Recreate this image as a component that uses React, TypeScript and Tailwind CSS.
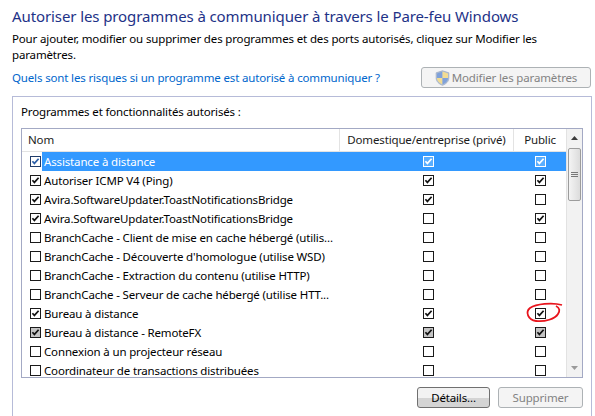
import React from "react";

type BoxKind = "normal" | "selected" | "selectedName" | "gray";

function Box({ checked, kind = "normal" }: { checked: boolean; kind?: BoxKind }) {
  const fill =
    kind === "selected" ? "#5aaeff" : kind === "gray" ? "#c4c4c4" : "#ffffff";
  const stroke =
    kind === "selected" ? "#ffffff" : kind === "selectedName" ? "#203c6a" : "#1a1a1a";
  const mark =
    kind === "selected" ? "#ffffff" : kind === "selectedName" ? "#2c5fa8" : "#111111";
  return (
    <svg width="11" height="11" viewBox="0 0 11 11" className="block shrink-0">
      <rect x="0.5" y="0.5" width="10" height="10" fill={fill} stroke={stroke} />
      {checked && (
        <path d="M2.4 5.2 L4.4 7.4 L8.6 2.8" fill="none" stroke={mark} strokeWidth="1.7" />
      )}
    </svg>
  );
}

function Shield() {
  return (
    <svg width="15" height="16" viewBox="0 0 15 16" className="shrink-0 opacity-70">
      <path d="M7.5 0.8 L13.8 2.8 L13.8 8 C13.8 11.6 11 14 7.5 15.3 C4 14 1.2 11.6 1.2 8 L1.2 2.8 Z" fill="#8fa9cf" stroke="#7c8fae" strokeWidth="0.8" />
      <path d="M7.5 1.6 L7.5 8 L2 8 L2 3.4 Z" fill="#4f7fd0" />
      <path d="M7.5 1.6 L13 3.4 L13 8 L7.5 8 Z" fill="#f2d36a" />
      <path d="M2 8 L7.5 8 L7.5 14.4 C4.6 13.2 2 11.2 2 8 Z" fill="#f2d36a" />
      <path d="M7.5 8 L13 8 C13 11.2 10.4 13.2 7.5 14.4 Z" fill="#4f7fd0" />
    </svg>
  );
}

const rows: { name: string; on: boolean; dom: boolean; pub: boolean; gray?: boolean }[] = [
  { name: "Assistance à distance", on: true, dom: true, pub: true },
  { name: "Autoriser ICMP V4 (Ping)", on: true, dom: true, pub: true },
  { name: "Avira.SoftwareUpdater.ToastNotificationsBridge", on: true, dom: true, pub: false },
  { name: "Avira.SoftwareUpdater.ToastNotificationsBridge", on: true, dom: false, pub: true },
  { name: "BranchCache - Client de mise en cache hébergé (utilis...", on: false, dom: false, pub: false },
  { name: "BranchCache - Découverte d'homologue (utilise WSD)", on: false, dom: false, pub: false },
  { name: "BranchCache - Extraction du contenu (utilise HTTP)", on: false, dom: false, pub: false },
  { name: "BranchCache - Serveur de cache hébergé (utilise HTT...", on: false, dom: false, pub: false },
  { name: "Bureau à distance", on: true, dom: true, pub: true },
  { name: "Bureau à distance - RemoteFX", on: true, dom: true, pub: true, gray: true },
  { name: "Connexion à un projecteur réseau", on: false, dom: false, pub: false },
  { name: "Coordinateur de transactions distribuées", on: false, dom: false, pub: false },
];

function ScrollBar() {
  return (
    <div className="flex w-[16px] shrink-0 flex-col border-l border-[#e2e2e2] bg-[#f2f2f2]">
      <div className="flex h-[18px] items-center justify-center">
        <svg width="7" height="4" viewBox="0 0 7 4"><path d="M0 4 L3.5 0 L7 4 Z" fill="#3c3c3c" /></svg>
      </div>
      <div className="mx-[1px] mt-[1px] flex h-[53px] items-center justify-center rounded-[2px] border border-[#9c9c9c] bg-gradient-to-r from-[#f4f4f4] to-[#dcdcdc]">
        <div className="flex flex-col gap-[1px]">
          <div className="h-px w-[7px] bg-[#777]" />
          <div className="h-px w-[7px] bg-[#777]" />
          <div className="h-px w-[7px] bg-[#777]" />
        </div>
      </div>
      <div className="flex-1" />
      <div className="flex h-[18px] items-center justify-center">
        <svg width="7" height="4" viewBox="0 0 7 4"><path d="M0 0 L3.5 4 L7 0 Z" fill="#9a9a9a" /></svg>
      </div>
    </div>
  );
}

export default function App() {
  return (
    <div className="relative h-[416px] w-[595px] overflow-hidden bg-white font-['Noto_Sans',sans-serif] text-[11.5px] tracking-[-0.15px] text-black">
      <h1 className="pl-[12px] pt-[6px] text-[15px] leading-[20px] font-normal tracking-[-0.1px] text-[#1e3287] whitespace-nowrap">
        Autoriser les programmes à communiquer à travers le Pare-feu Windows
      </h1>

      <p className="mt-[5px] pl-[12px] leading-[16px] whitespace-nowrap">
        Pour ajouter, modifier ou supprimer des programmes et des ports autorisés, cliquez sur Modifier les
        <br />
        paramètres.
      </p>

      <div className="mt-[4px] flex h-[21px] items-center justify-between pl-[12px] pr-[4px]">
        <span className="text-[#0066cc] whitespace-nowrap">
          Quels sont les risques si un programme est autorisé à communiquer ?
        </span>
        <button className="flex h-[21px] w-[170px] items-center justify-center gap-[2px] rounded-[3px] border border-[#adb2b5] bg-[#f4f4f4] text-[#838383]">
          <Shield />
          <span>Modifier les paramètres</span>
        </button>
      </div>

      <div className="ml-[12px] mt-[8px] h-[330px] w-[580px] border border-[#b6bbd8] px-[8px] pt-[7px]">
        <div className="leading-[16px]">Programmes et fonctionnalités autorisés :</div>

        <div className="mt-[8px] flex h-[250px] border border-[#a3a9c4]">
          <div className="flex min-w-0 flex-1 flex-col overflow-hidden">
            <div className="flex h-[23px] shrink-0 border-b border-[#e3e3e3] text-[#1b1b1b]">
              <div className="flex w-[318px] items-center border-r border-[#e3e3e3] pl-[6px]">Nom</div>
              <div className="flex w-[174px] items-center justify-center border-r border-[#e3e3e3]">Domestique/entreprise (privé)</div>
              <div className="flex w-[52px] items-center justify-center">Public</div>
            </div>
            {rows.map((r, i) => {
              const sel = i === 0;
              const colKind: BoxKind = sel ? "selected" : r.gray ? "gray" : "normal";
              return (
                <div key={i} className="flex h-[19px] shrink-0 items-center">
                  <div className="flex w-[20px] shrink-0 items-center pl-[8px]">
                    <Box checked={r.on} kind={sel ? "selectedName" : r.gray ? "gray" : "normal"} />
                  </div>
                  <div className={`flex h-[19px] flex-1 items-center ${sel ? "bg-[#3399ff] text-white" : ""}`}>
                    <div className="w-[298px] overflow-hidden whitespace-nowrap pl-[2px]">{r.name}</div>
                    <div className="flex w-[174px] justify-center pl-[2px]">
                      <Box checked={r.dom} kind={colKind} />
                    </div>
                    <div className="flex w-[52px] justify-center pl-[1px]">
                      <Box checked={r.pub} kind={colKind} />
                    </div>
                  </div>
                </div>
              );
            })}
          </div>
          <ScrollBar />
        </div>

        <div className="mt-[9px] flex justify-end gap-[8px]">
          <button className="h-[21px] w-[73px] rounded-[3px] border border-[#707070] bg-gradient-to-b from-[#f2f2f2] from-50% to-[#d4d4d4] to-50%">
            Détails...
          </button>
          <button className="h-[21px] w-[85px] rounded-[3px] border border-[#adb2b5] bg-[#f4f4f4] text-[#838383]">
            Supprimer
          </button>
        </div>
      </div>

      <svg className="pointer-events-none absolute left-0 top-0" width="595" height="416">
        <path
          d="M562 305 C552 302 536 304 530 308 C525 312 528 320 536 321 C545 322 555 319 558 314 C560 311 560 308 556 306"
          fill="none"
          stroke="#e8141c"
          strokeWidth="1.8"
        />
      </svg>
    </div>
  );
}
